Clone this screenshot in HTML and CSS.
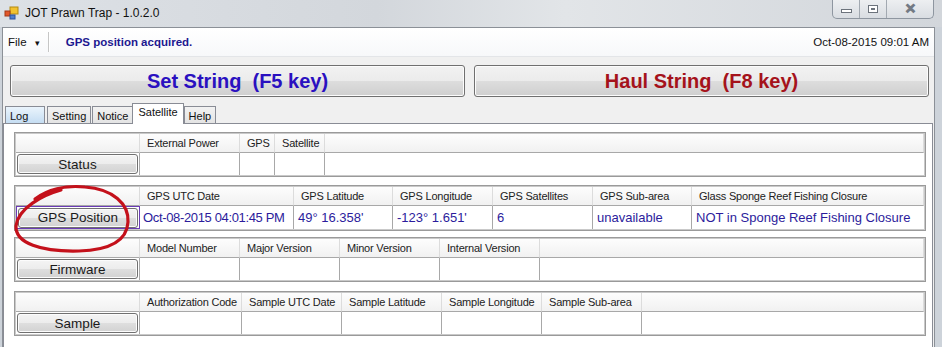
FILE: index.html
```html
<!DOCTYPE html>
<html lang="en">
<head>
    <meta charset="UTF-8">
    <title>JOT Prawn Trap - 1.0.2.0</title>
    <link rel="stylesheet" href="styles.css">
</head>
<body>

<div class="window">
    <div class="titlebar">
        <svg class="app-icon" width="16" height="14" viewBox="0 0 16 14">
            <rect x="6" y="1" width="8" height="7" fill="#f2c230" stroke="#b48a10" stroke-width="1"/>
            <rect x="1" y="5" width="5" height="5" fill="#e2572c" stroke="#a33a18" stroke-width="1"/>
            <rect x="6" y="9" width="5" height="4" fill="#4f7fd0" stroke="#2d509a" stroke-width="1"/>
        </svg>
        <span class="title">JOT Prawn Trap - 1.0.2.0</span>
        <div class="caption-buttons">
            <span class="cap-btn cap-min"><i></i></span>
            <span class="cap-btn cap-max"><i></i></span>
            <span class="cap-btn cap-close">&#x2715;</span>
        </div>
    </div>

    <div class="client">
        <div class="menubar">
            <span class="menu-file">File <span class="caret">&#9662;</span></span>
            <span class="menu-sep"></span>
            <span class="status-msg">GPS position acquired.</span>
            <span class="clock">Oct-08-2015 09:01 AM</span>
        </div>

        <div class="actions">
            <button class="big-btn set">Set String&nbsp; (F5 key)</button>
            <button class="big-btn haul">Haul String&nbsp; (F8 key)</button>
        </div>

        <div class="tabs">
            <span class="tab tab-log">Log</span>
            <span class="tab">Setting</span>
            <span class="tab">Notice</span>
            <span class="tab active">Satellite</span>
            <span class="tab">Help</span>
        </div>

        <div class="panel">
            <div class="grid grid-status">
                <div class="hd"></div>
                <div class="hd">External Power</div>
                <div class="hd">GPS</div>
                <div class="hd">Satellite</div>
                <div class="hd"></div>
                <div class="cell first"><button class="row-btn">Status</button></div>
                <div class="cell"></div>
                <div class="cell"></div>
                <div class="cell"></div>
                <div class="cell"></div>
            </div>

            <div class="grid grid-gps">
                <div class="hd"></div>
                <div class="hd">GPS UTC Date</div>
                <div class="hd">GPS Latitude</div>
                <div class="hd">GPS Longitude</div>
                <div class="hd">GPS Satellites</div>
                <div class="hd">GPS Sub-area</div>
                <div class="hd">Glass Sponge Reef Fishing Closure</div>
                <div class="cell first selected"><button class="row-btn">GPS Position</button></div>
                <div class="cell val tight">Oct-08-2015 04:01:45 PM</div>
                <div class="cell val">49° 16.358'</div>
                <div class="cell val">-123° 1.651'</div>
                <div class="cell val">6</div>
                <div class="cell val">unavailable</div>
                <div class="cell val">NOT in Sponge Reef Fishing Closure</div>
                <svg class="scribble" width="130" height="75" viewBox="0 0 130 75">
                    <path d="M46 4 C28 9, 3 22, 1 40 C0 57, 26 66, 64 65 C98 64, 112 53, 113 36 C114 18, 98 3, 70 1 C50 -1, 32 4, 20 13"
                          fill="none" stroke="#c4111b" stroke-width="3.2" stroke-linecap="round"/>
                </svg>
            </div>

            <div class="grid grid-firmware">
                <div class="hd"></div>
                <div class="hd">Model Number</div>
                <div class="hd">Major Version</div>
                <div class="hd">Minor Version</div>
                <div class="hd">Internal Version</div>
                <div class="hd"></div>
                <div class="cell first"><button class="row-btn">Firmware</button></div>
                <div class="cell"></div>
                <div class="cell"></div>
                <div class="cell"></div>
                <div class="cell"></div>
                <div class="cell"></div>
            </div>

            <div class="grid grid-sample">
                <div class="hd"></div>
                <div class="hd">Authorization Code</div>
                <div class="hd">Sample UTC Date</div>
                <div class="hd">Sample Latitude</div>
                <div class="hd">Sample Longitude</div>
                <div class="hd">Sample Sub-area</div>
                <div class="hd"></div>
                <div class="cell first"><button class="row-btn">Sample</button></div>
                <div class="cell"></div>
                <div class="cell"></div>
                <div class="cell"></div>
                <div class="cell"></div>
                <div class="cell"></div>
                <div class="cell"></div>
            </div>
        </div>
    </div>
</div>

</body>
</html>
```

FILE: styles.css
```css
* {
    margin: 0;
    padding: 0;
    box-sizing: border-box;
}

body {
    width: 942px;
    height: 347px;
    overflow: hidden;
    font-family: 'Liberation Sans', Arial, sans-serif;
    font-size: 12px;
    color: #1a1a1a;
    background-color: #cdd3da;
}

.window {
    height: 100%;
    display: flex;
    flex-direction: column;
}

/* title bar */

.titlebar {
    height: 27px;
    flex-shrink: 0;
    display: flex;
    align-items: center;
    padding-left: 4px;
    background: linear-gradient(to right, #dde1e6, #d3d7dc 40%, #e2e5e8 60%, #d2d6db);
    position: relative;
}

.app-icon {
    margin-right: 5px;
    margin-top: -2px;
}

.title {
    font-size: 12px;
    color: #111;
    margin-top: -2px;
}

.caption-buttons {
    position: absolute;
    top: -1px;
    right: 8px;
    display: flex;
    height: 20px;
    border: 1px solid #8e96a0;
    border-top: 0;
    border-radius: 0 0 5px 5px;
    background: linear-gradient(#eef0f2, #d9dde2);
    overflow: hidden;
}

.cap-btn {
    width: 27px;
    display: flex;
    align-items: center;
    justify-content: center;
    border-right: 1px solid #a2a9b1;
    color: #8a9099;
}

.cap-close {
    width: 46px;
    border-right: 0;
    font-size: 13px;
    font-weight: bold;
    color: #fff;
    -webkit-text-stroke: 1px #737a84;
}

.cap-min i {
    display: block;
    width: 11px;
    height: 4px;
    margin-top: 5px;
    border: 1px solid #6c737c;
    background: #fff;
}

.cap-max i {
    display: block;
    width: 10px;
    height: 8px;
    border: 1px solid #6c737c;
    box-shadow: inset 0 0 0 2px #fff, inset 0 0 0 3px #6c737c;
}

/* client area */

.client {
    flex: 1;
    margin: 0 7px 0 2px;
    border: 1px solid #8b9097;
    border-bottom: 0;
    background-color: #f0f0f0;
    display: flex;
    flex-direction: column;
}

.menubar {
    height: 29px;
    flex-shrink: 0;
    display: flex;
    align-items: center;
    padding: 0 5px 0 5px;
    font-size: 11.5px;
    background: linear-gradient(#ffffff, #f7f8fa);
    border-bottom: 1px solid #e3e5e8;
}

.menu-file {
    color: #111;
}

.caret {
    font-size: 9px;
    margin-left: 5px;
}

.menu-sep {
    width: 1px;
    height: 20px;
    background-color: #c6c6c6;
    box-shadow: 1px 0 0 #fff;
    margin: 0 17px 0 8px;
}

.status-msg {
    font-weight: bold;
    color: #1d1890;
}

.clock {
    margin-left: auto;
    color: #111;
}

.actions {
    display: flex;
    gap: 9px;
    padding: 8px 5px 0 7px;
}

.big-btn {
    flex: 1;
    height: 32px;
    border: 1px solid #707070;
    border-radius: 3px;
    background: linear-gradient(#f2f2f2 0%, #ebebeb 50%, #dddddd 51%, #cfcfcf 100%);
    box-shadow: inset 0 0 0 1px #fcfcfc;
    font-family: 'Liberation Sans', Arial, sans-serif;
    font-size: 20px;
    font-weight: bold;
}

.big-btn.set {
    color: #2a10c0;
}

.big-btn.haul {
    color: #a5121b;
}

/* tabs */

.tabs {
    display: flex;
    align-items: flex-end;
    height: 28px;
    padding-left: 2px;
    margin-top: -1px;
}

.tab {
    height: 18px;
    padding: 0 4px;
    margin-right: 1px;
    border: 1px solid #898c95;
    border-bottom: 0;
    background: linear-gradient(#f2f2f2, #e3e3e3);
    font-size: 11px;
    line-height: 18px;
    color: #111;
}

.tab-log {
    width: 40px;
    margin-right: 2px;
    background: linear-gradient(#eaf4fc, #c3dcf2);
}

.tab.active {
    height: 21px;
    margin: 0 -1px 0 -2px;
    padding: 0 5px;
    background: #fff;
    position: relative;
    z-index: 1;
    line-height: 17px;
}

.tab.active + .tab {
    margin-left: 1px;
}

.panel {
    flex: 1;
    margin: -1px 1px 0 0;
    border: 1px solid #898c95;
    border-bottom: 0;
    background-color: #fff;
    padding: 8px 6px 0 10px;
    display: flex;
    flex-direction: column;
    gap: 8px;
}

/* data grids */

.grid {
    display: grid;
    grid-template-rows: 19px 22px;
    border: 1px solid #9a9a9a;
    box-shadow: inset 0 0 0 1px #c9c9c9;
    padding: 1px;
    position: relative;
    background-color: #fff;
}

.grid-status {
    grid-template-columns: 124px 100px 35px 50px 1fr;
}

.grid-gps {
    grid-template-columns: 124px 154px 99px 100px 100px 99px 1fr;
    grid-template-rows: 19px 23px;
}

.grid-firmware {
    grid-template-columns: 124px 100px 100px 100px 100px 1fr;
    margin-top: -2px;
}

.grid-sample {
    grid-template-columns: 124px 102px 100px 100px 100px 100px 1fr;
    margin-top: 1px;
}

.hd {
    background: linear-gradient(#fdfdfd, #f1f1f1);
    border-right: 1px solid #dcdcdc;
    border-bottom: 1px solid #a8a8a8;
    padding-left: 7px;
    font-size: 11px;
    letter-spacing: -0.2px;
    line-height: 18px;
    color: #222;
    white-space: nowrap;
    overflow: hidden;
}

.hd:nth-last-child(1) {
    border-right: 0;
}

.cell {
    border-right: 1px solid #a8a8a8;
    padding-left: 4px;
    display: flex;
    align-items: center;
    white-space: nowrap;
    overflow: hidden;
}

.cell:last-of-type {
    border-right: 0;
}

.cell.first {
    padding: 1px;
}

.cell.selected {
    border: 1px solid #6a3cb6;
}

.val {
    font-family: 'Liberation Sans', Arial, sans-serif;
    font-size: 13px;
    color: #2c1c9c;
}

.val.tight {
    padding-left: 3px;
    letter-spacing: -0.35px;
}

.row-btn {
    width: 100%;
    height: 20px;
    border: 1px solid #707070;
    border-radius: 3px;
    background: linear-gradient(#f4f4f4 0%, #ececec 50%, #dedede 51%, #d2d2d2 100%);
    box-shadow: inset 0 0 0 1px #fcfcfc;
    font-family: 'Liberation Sans', Arial, sans-serif;
    font-size: 13.5px;
    color: #1a1a1a;
}

.scribble {
    position: absolute;
    left: 0;
    top: 0;
    z-index: 5;
    overflow: visible;
    pointer-events: none;
}
```
